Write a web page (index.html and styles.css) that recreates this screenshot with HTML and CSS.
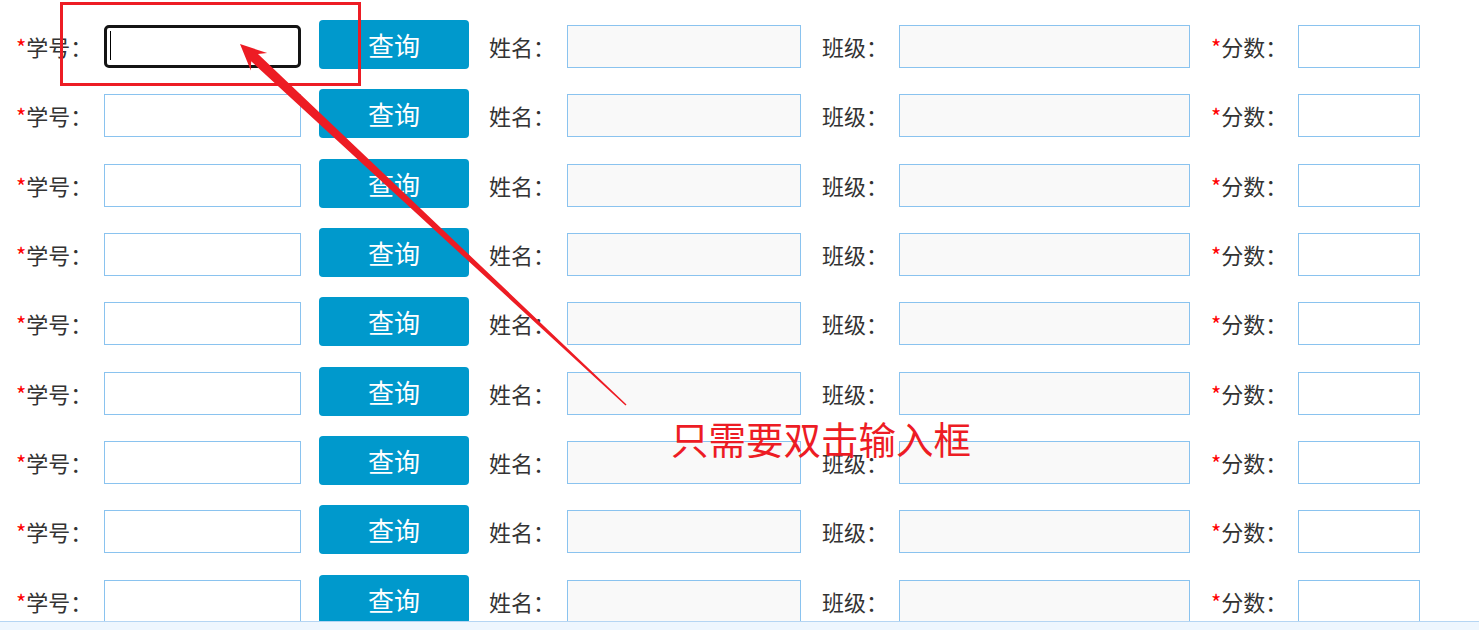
FILE: index.html
```html
<!DOCTYPE html>
<html lang="zh-CN">
<head>
<meta charset="utf-8">
<title>成绩录入</title>
<link rel="stylesheet" href="styles.css">
</head>
<body>
<div class="page">
  <form class="form">
    <div class="row">
      <label class="lbl lbl-id"><span class="req">*</span>学号：</label>
      <input class="box box-id focused" type="text">
      <button type="button" class="btn">查询</button>
      <label class="lbl lbl-name">姓名：</label>
      <input class="box box-name ro" type="text" readonly>
      <label class="lbl lbl-class">班级：</label>
      <input class="box box-class ro" type="text" readonly>
      <label class="lbl lbl-score"><span class="req">*</span>分数：</label>
      <input class="box box-score" type="text">
    </div>
    <div class="row">
      <label class="lbl lbl-id"><span class="req">*</span>学号：</label>
      <input class="box box-id" type="text">
      <button type="button" class="btn">查询</button>
      <label class="lbl lbl-name">姓名：</label>
      <input class="box box-name ro" type="text" readonly>
      <label class="lbl lbl-class">班级：</label>
      <input class="box box-class ro" type="text" readonly>
      <label class="lbl lbl-score"><span class="req">*</span>分数：</label>
      <input class="box box-score" type="text">
    </div>
    <div class="row">
      <label class="lbl lbl-id"><span class="req">*</span>学号：</label>
      <input class="box box-id" type="text">
      <button type="button" class="btn">查询</button>
      <label class="lbl lbl-name">姓名：</label>
      <input class="box box-name ro" type="text" readonly>
      <label class="lbl lbl-class">班级：</label>
      <input class="box box-class ro" type="text" readonly>
      <label class="lbl lbl-score"><span class="req">*</span>分数：</label>
      <input class="box box-score" type="text">
    </div>
    <div class="row">
      <label class="lbl lbl-id"><span class="req">*</span>学号：</label>
      <input class="box box-id" type="text">
      <button type="button" class="btn">查询</button>
      <label class="lbl lbl-name">姓名：</label>
      <input class="box box-name ro" type="text" readonly>
      <label class="lbl lbl-class">班级：</label>
      <input class="box box-class ro" type="text" readonly>
      <label class="lbl lbl-score"><span class="req">*</span>分数：</label>
      <input class="box box-score" type="text">
    </div>
    <div class="row">
      <label class="lbl lbl-id"><span class="req">*</span>学号：</label>
      <input class="box box-id" type="text">
      <button type="button" class="btn">查询</button>
      <label class="lbl lbl-name">姓名：</label>
      <input class="box box-name ro" type="text" readonly>
      <label class="lbl lbl-class">班级：</label>
      <input class="box box-class ro" type="text" readonly>
      <label class="lbl lbl-score"><span class="req">*</span>分数：</label>
      <input class="box box-score" type="text">
    </div>
    <div class="row">
      <label class="lbl lbl-id"><span class="req">*</span>学号：</label>
      <input class="box box-id" type="text">
      <button type="button" class="btn">查询</button>
      <label class="lbl lbl-name">姓名：</label>
      <input class="box box-name ro" type="text" readonly>
      <label class="lbl lbl-class">班级：</label>
      <input class="box box-class ro" type="text" readonly>
      <label class="lbl lbl-score"><span class="req">*</span>分数：</label>
      <input class="box box-score" type="text">
    </div>
    <div class="row">
      <label class="lbl lbl-id"><span class="req">*</span>学号：</label>
      <input class="box box-id" type="text">
      <button type="button" class="btn">查询</button>
      <label class="lbl lbl-name">姓名：</label>
      <input class="box box-name ro" type="text" readonly>
      <label class="lbl lbl-class">班级：</label>
      <input class="box box-class ro" type="text" readonly>
      <label class="lbl lbl-score"><span class="req">*</span>分数：</label>
      <input class="box box-score" type="text">
    </div>
    <div class="row">
      <label class="lbl lbl-id"><span class="req">*</span>学号：</label>
      <input class="box box-id" type="text">
      <button type="button" class="btn">查询</button>
      <label class="lbl lbl-name">姓名：</label>
      <input class="box box-name ro" type="text" readonly>
      <label class="lbl lbl-class">班级：</label>
      <input class="box box-class ro" type="text" readonly>
      <label class="lbl lbl-score"><span class="req">*</span>分数：</label>
      <input class="box box-score" type="text">
    </div>
    <div class="row">
      <label class="lbl lbl-id"><span class="req">*</span>学号：</label>
      <input class="box box-id" type="text">
      <button type="button" class="btn">查询</button>
      <label class="lbl lbl-name">姓名：</label>
      <input class="box box-name ro" type="text" readonly>
      <label class="lbl lbl-class">班级：</label>
      <input class="box box-class ro" type="text" readonly>
      <label class="lbl lbl-score"><span class="req">*</span>分数：</label>
      <input class="box box-score" type="text">
    </div>
  </form>

  <div class="mark-rect"></div>
  <svg class="mark-arrow" width="1479" height="630" viewBox="0 0 1479 630" aria-hidden="true">
    <polygon fill="#ed1c24" points="240,44 267.2,53 258,54 626.5,404.4 625.5,405.6 251.2,61.3 250.8,70.5"/>
  </svg>
  <div class="mark-text">只需要双击输入框</div>
</div>
<div class="status-strip"></div>
</body>
</html>
```

FILE: styles.css
```css
html, body {
  margin: 0;
  padding: 0;
  background: #ffffff;
}

body {
  font-family: "Noto Sans CJK SC", "Microsoft YaHei", sans-serif;
  color: #333333;
  overflow: hidden;
  height: 630px;
}

.page {
  position: relative;
  width: 1479px;
  height: 630px;
}

.form {
  padding-top: 20px;
}

.row {
  display: flex;
  align-items: flex-start;
  height: 69.333px;
  padding-left: 16px;
}

.lbl {
  display: block;
  flex: none;
  height: 43px;
  margin-top: 5px;
  line-height: 42px;
  font-size: 22px;
  color: #333333;
  white-space: nowrap;
}

.req {
  color: #ff0000;
}

.lbl-id { width: 88px; }
.lbl-name { width: 78px; margin-left: 20px; }
.lbl-class { width: 77px; margin-left: 21px; }
.lbl-score { width: 87px; margin-left: 21px; }

.box {
  display: block;
  flex: none;
  box-sizing: border-box;
  height: 43px;
  margin: 5px 0 0 0;
  padding: 0 6px;
  border: 1px solid #8ac3ef;
  border-radius: 0;
  background: #ffffff;
  font-family: inherit;
  font-size: 18px;
  outline: none;
}

.box.ro {
  background: #f9f9f9;
}

.box-id { width: 197px; }
.box-name { width: 234px; }
.box-class { width: 291px; }
.box-score { width: 122px; }

.box.focused {
  border: 3px solid #141414;
  border-radius: 5px;
  background: #ffffff linear-gradient(#000000, #000000) no-repeat 3px 3px / 1px 29px;
}

.btn {
  display: block;
  flex: none;
  box-sizing: border-box;
  width: 150px;
  height: 49px;
  margin-left: 18px;
  padding: 0;
  border: none;
  border-radius: 4px;
  background: #0099cc;
  color: #ffffff;
  font-family: inherit;
  font-size: 26px;
  line-height: 49px;
  cursor: pointer;
}

.mark-rect {
  position: absolute;
  left: 60px;
  top: 2px;
  width: 301px;
  height: 84px;
  box-sizing: border-box;
  border: 3px solid #ed1c24;
  pointer-events: none;
}

.mark-arrow {
  position: absolute;
  left: 0;
  top: 0;
  pointer-events: none;
}

.mark-text {
  position: absolute;
  left: 671px;
  top: 419px;
  font-size: 37.5px;
  line-height: 38px;
  color: #ed1c24;
  white-space: nowrap;
  pointer-events: none;
}

.status-strip {
  position: fixed;
  left: 0;
  right: 0;
  bottom: 0;
  height: 8px;
  background: #eef6fe;
  border-top: 1px solid #b5d5f3;
}
```
